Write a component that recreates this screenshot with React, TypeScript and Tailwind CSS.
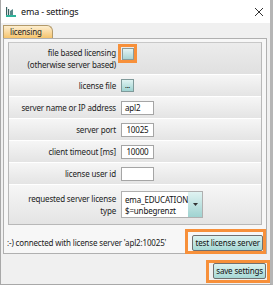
import React from "react";

const font = { fontFamily: '"Noto Sans", "Open Sans", sans-serif' };

function Row({ label, children, tall }: { label: React.ReactNode; children: React.ReactNode; tall?: boolean }) {
  return (
    <div
      className={`flex items-center border-t border-white bg-gradient-to-b from-[#f6f6f6] to-[#e4e4e4] ${tall ? "h-[40px]" : "h-[22px]"}`}
    >
      <div className="w-[107px] text-right leading-[12px] text-[#222]">{label}</div>
      <div className="ml-[5px] flex items-center">{children}</div>
    </div>
  );
}

function Input({ value }: { value: string }) {
  return (
    <div className="h-[14px] w-[33px] border border-[#a5a5a5] bg-white text-center leading-[12px] text-[#111]">
      {value}
    </div>
  );
}

export default function App() {
  return (
    <div
      className="relative h-[285px] w-[273px] overflow-hidden border-l border-r-[3px] border-b border-l-[#a8a8a8] border-r-[#b5b5b5] border-b-[#a8a8a8] bg-[#f0f0f0] text-[8px] tracking-[-0.16px] whitespace-nowrap"
      style={font}
    >
      {/* title bar */}
      <div className="flex h-[23px] items-center bg-white pl-[4px] pr-[6px]">
        <svg width="12" height="12" viewBox="0 0 12 12">
          <rect x="1" y="1" width="1.2" height="9" fill="#3a6060" />
          <rect x="3" y="3" width="1.2" height="7" fill="#3a6060" />
          <path d="M5 5 L8 3 L8 10 L5 10 Z" fill="#5a8a8a" />
          <rect x="1" y="9" width="10" height="2" fill="#2fb39a" />
        </svg>
        <span className="ml-[4px] text-[9px] text-[#111]">ema - settings</span>
        <div className="flex-1" />
        <svg width="10" height="10" viewBox="0 0 10 10">
          <path d="M1 1 L9 9 M9 1 L1 9" stroke="#333" strokeWidth="1" />
        </svg>
      </div>

      {/* body */}
      <div className="pl-[2px] pt-[2px]">
        <div className="flex">
          <div className="flex h-[13px] w-[50px] items-center rounded-tr-[6px] border border-b-0 border-[#b39a6a] bg-gradient-to-b from-[#fdeecf] to-[#f5c46c] pl-[6px] text-[#222]">
            licensing
          </div>
        </div>
        <div className="h-[216px] w-[264px] border border-[#b0b0b0] bg-[#f7f7f7] pt-[3px]">
          <div className="mx-[4px] border border-[#b8b8b8] border-t-[#c8c8c8] bg-[#e9e9e9]">
            <div className="flex h-[31px] items-center bg-gradient-to-b from-[#ececec] to-[#e0e0e0]">
              <div className="w-[107px] text-right leading-[12px] text-[#222]">
                file based licensing
                <br />
                (otherwise server based)
              </div>
              <div className="ml-[2px] mt-[-10px] flex h-[19px] w-[19px] items-center justify-center border-[3px] border-[#f7903a]">
                <div className="h-[12px] w-[12px] border border-[#8a9a9a] bg-gradient-to-b from-[#e3f3f3] to-[#a9d4d4]" />
              </div>
            </div>
            <Row label="license file">
              <div className="flex h-[13px] w-[13px] items-center justify-center border border-[#7f9a9a] bg-gradient-to-b from-[#e0f3f2] to-[#9fd3d1] text-[7px] leading-[7px]">
                ...
              </div>
            </Row>
            <Row label="server name or IP address">
              <div className="h-[14px] w-[33px] border border-[#a5a5a5] bg-white pl-[3px] leading-[12px] text-[#111]">apl2</div>
            </Row>
            <Row label="server port">
              <Input value="10025" />
            </Row>
            <Row label="client timeout [ms]">
              <Input value="10000" />
            </Row>
            <Row label="license user id">
              <Input value="" />
            </Row>
            <Row
              tall
              label={
                <>
                  requested server license
                  <br />
                  type
                </>
              }
            >
              <div className="flex h-[27px] w-[82px] border border-[#b0b0b0] bg-white">
                <div className="flex-1 pl-[3px] pt-[2px] leading-[11px] text-[#111]">
                  ema_EDUCATION
                  <br />
                  $=unbegrenzt
                </div>
                <div className="flex w-[14px] items-center justify-center bg-gradient-to-b from-[#e0f3f2] to-[#9fd3d1]">
                  <svg width="5" height="3" viewBox="0 0 5 3">
                    <path d="M0 0 L5 0 L2.5 3 Z" fill="#333" />
                  </svg>
                </div>
              </div>
            </Row>
          </div>
          <div className="mt-[4px] flex items-center justify-between pl-[3px]">
            <span className="pt-[3px] text-[#222]">:-) connected with license server 'apl2:10025'</span>
            <div className="border-[3px] border-[#f7903a] pl-[4px] pt-[3px]">
              <div className="h-[16px] rounded-[2px] border border-[#707070] bg-gradient-to-b from-[#dcf2f0] to-[#a6d8d5] px-[2px] leading-[14px] text-[#111]">
                test license server
              </div>
            </div>
          </div>
        </div>
        <div className="mt-[6px] flex justify-end">
          <div className="border-[3px] border-[#f7903a] pb-[1px] pl-[4px] pr-[1px]">
            <div className="h-[16px] rounded-[2px] border border-[#707070] bg-gradient-to-b from-[#dcf2f0] to-[#a6d8d5] px-[2px] leading-[14px] text-[#111]">
              save settings
            </div>
          </div>
        </div>
      </div>
    </div>
  );
}
